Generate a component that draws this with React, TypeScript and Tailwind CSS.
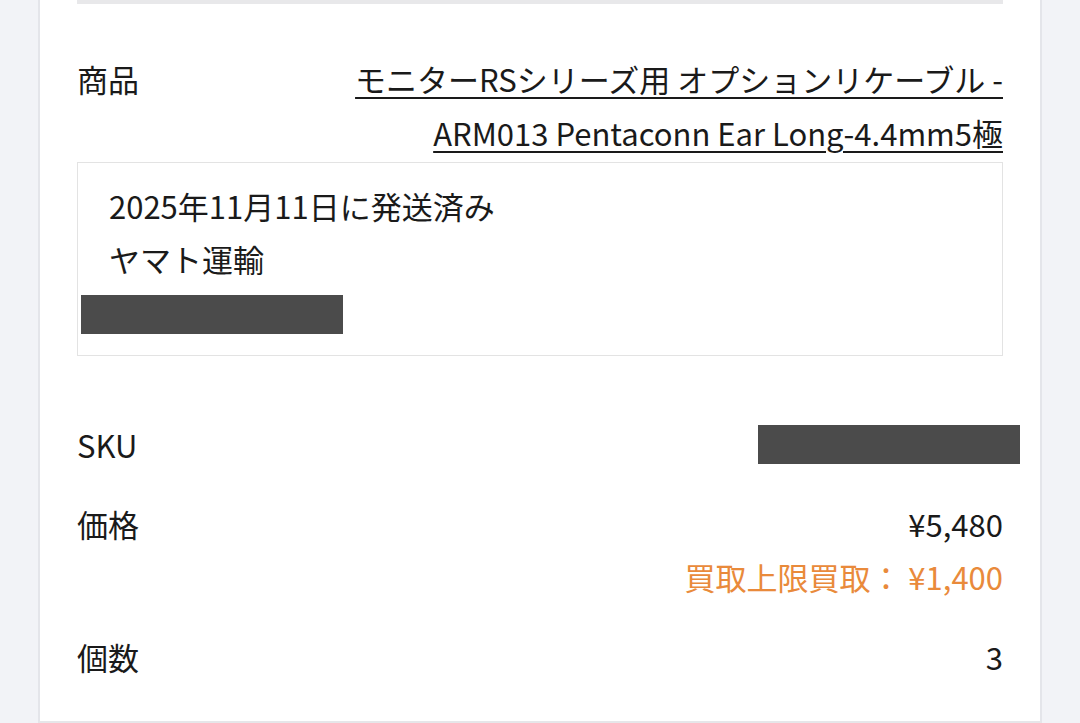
const font = { fontFamily: '"Noto Sans CJK JP", "Noto Sans", sans-serif' };

function Redacted({ className = "" }: { className?: string }) {
  return <div className={`h-[39px] w-[262px] bg-[#4b4b4b] ${className}`} />;
}

export default function App() {
  return (
    <div className="min-h-[723px] bg-[#f2f3f7]" style={font}>
      <div className="mx-[38px] min-h-[723px] border-x-2 border-[#e4e5ea] border-b-2 border-b-[#e6e6e9] bg-white px-[37px] text-[31px] text-[#1a1a1a]">
        <div className="border-t-4 border-[#e8e8ea]">
          {/* product title */}
          <div className="mt-[48px] flex items-start justify-between leading-[54px]">
            <span>商品</span>
            <a className="text-right underline decoration-[2px] underline-offset-[5px]">
              モニターRSシリーズ用 オプションリケーブル -<br />
              ARM013 Pentaconn Ear Long-4.4mm5極
            </a>
          </div>

          {/* shipment box */}
          <div className="mt-[2px] border border-[#e3e3e3] px-[31px] pt-[16px] pb-[21px] leading-[53px]">
            <div>2025年11月11日に発送済み</div>
            <div>ヤマト運輸</div>
            <Redacted className="-ml-[28px] mt-[10px]" />
          </div>

          <div className="mt-[62px] flex items-center justify-between leading-[53px]">
            <span>SKU</span>
            <Redacted className="-mr-[17px] -mt-[1px]" />
          </div>

          <div className="mt-[26px] flex items-start justify-between leading-[53px]">
            <span>価格</span>
            <div className="text-right">
              <div>¥5,480</div>
              <div className="text-[#e98a3b]">買取上限買取： ¥1,400</div>
            </div>
          </div>

          <div className="mt-[27px] flex items-start justify-between leading-[53px]">
            <span>個数</span>
            <span>3</span>
          </div>
        </div>
      </div>
    </div>
  );
}
